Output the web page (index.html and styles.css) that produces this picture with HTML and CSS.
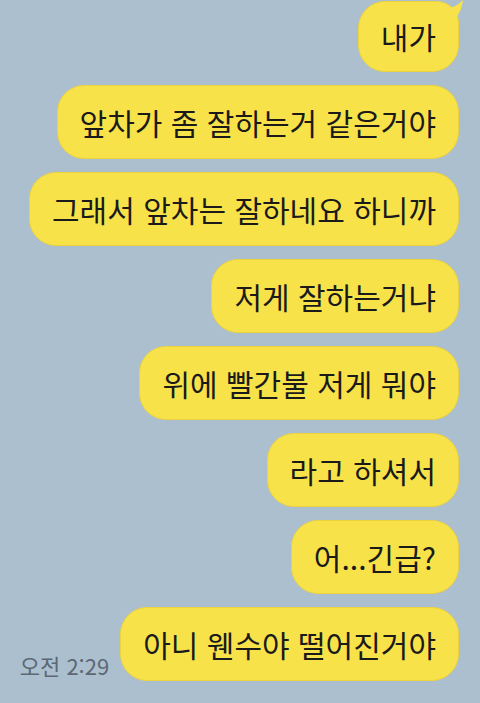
FILE: index.html
```html
<!DOCTYPE html>
<html lang="ko">
<head>
  <meta charset="UTF-8" />
  <meta name="viewport" content="width=device-width, initial-scale=1" />
  <title>채팅</title>
  <link rel="stylesheet" href="styles.css">
</head>
<body>

  <div class="chat">
    <div class="row">
      <div class="bubble first">
        내가
        <svg class="tail" width="20" height="22" viewBox="0 0 20 22">
          <path d="M0 8 C6 8 11 5 16 0 C15 8 12 15 6 22 L0 22 Z" fill="#f8e24a" />
        </svg>
      </div>
    </div>
    <div class="row"><div class="bubble">앞차가 좀 잘하는거 같은거야</div></div>
    <div class="row"><div class="bubble">그래서 앞차는 잘하네요 하니까</div></div>
    <div class="row"><div class="bubble">저게 잘하는거냐</div></div>
    <div class="row"><div class="bubble">위에 빨간불 저게 뭐야</div></div>
    <div class="row"><div class="bubble">라고 하셔서</div></div>
    <div class="row"><div class="bubble">어...긴급?</div></div>
    <div class="row">
      <span class="time">오전 2:29</span>
      <div class="bubble">아니 웬수야 떨어진거야</div>
    </div>
  </div>

</body>
</html>
```

FILE: styles.css
```css
body {
  margin: 0;
  background-color: #abbfcf;
  font-family: 'Noto Sans CJK KR', 'Noto Sans', sans-serif;
  color: #1a1a1a;
  height: 703px;
  overflow: hidden;
}
.chat {
  display: flex;
  flex-direction: column;
  gap: 13px;
  padding: 1px 21px 0 0;
}
.row {
  display: flex;
  justify-content: flex-end;
  align-items: flex-end;
  gap: 11px;
}
.bubble {
  position: relative;
  box-sizing: border-box;
  height: 74px;
  padding: 0 22px;
  background-color: #f8e24a;
  border: 1px solid #ecd23e;
  border-radius: 27px;
  font-size: 30px;
  line-height: 72px;
  white-space: nowrap;
}
.bubble.first {
  height: 71px;
  line-height: 69px;
  border-top-right-radius: 22px;
}
.tail {
  position: absolute;
  top: -2px;
  right: -9px;
}
.time {
  font-size: 22px;
  color: #5d6872;
  padding-bottom: 0;
}
```
